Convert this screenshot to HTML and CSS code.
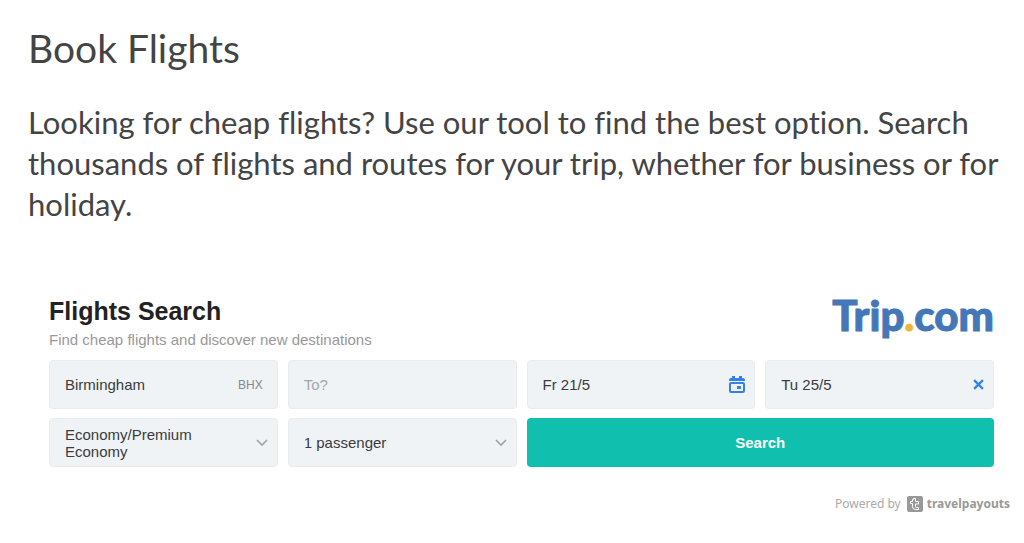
FILE: index.html
```html
<!DOCTYPE html>
<html lang="en">
<head>
    <meta charset="UTF-8">
    <meta name="viewport" content="width=device-width, initial-scale=1.0">
    <title>Book Flights</title>
    <link rel="stylesheet" href="styles.css">
</head>
<body>
    <main class="page">
        <h1>Book Flights</h1>
        <p class="intro">Looking for cheap flights? Use our tool to find the best option. Search thousands of flights and routes for your trip, whether for business or for holiday.</p>

        <section class="widget">
            <div class="widget-header">
                <div>
                    <h2>Flights Search</h2>
                    <p class="subtitle">Find cheap flights and discover new destinations</p>
                </div>
                <a class="logo" href="#">Trip<span class="logo-dot">.</span>com</a>
            </div>

            <form class="search-form">
                <label class="field">
                    <input type="text" name="origin" value="Birmingham" aria-label="From">
                    <span class="code">BHX</span>
                </label>
                <label class="field">
                    <input type="text" name="destination" placeholder="To?" aria-label="To">
                </label>
                <label class="field">
                    <input type="text" name="depart" value="Fr 21/5" aria-label="Depart date">
                    <svg class="calendar" viewBox="0 0 16 17" aria-hidden="true">
                        <path d="M0 5V4q0-2 2-2h1V0h3v2h4V0h3v2h1q2 0 2 2v1z" fill="currentColor"/>
                        <rect x="1" y="7" width="14" height="9" rx="1" fill="none" stroke="currentColor" stroke-width="2"/>
                        <rect x="8" y="10" width="4" height="3" fill="currentColor"/>
                    </svg>
                </label>
                <div class="field">
                    <input type="text" name="return" value="Tu 25/5" aria-label="Return date">
                    <button type="button" class="clear" aria-label="Clear return date">
                        <svg viewBox="0 0 10 10" aria-hidden="true">
                            <path d="M1 1l8 8M9 1L1 9" fill="none" stroke="currentColor" stroke-width="2"/>
                        </svg>
                    </button>
                </div>
                <label class="field">
                    <select name="cabin" aria-label="Cabin class">
                        <option>Economy/Premium Economy</option>
                        <option>Business</option>
                        <option>First</option>
                    </select>
                    <svg class="arrow" viewBox="0 0 12 8" aria-hidden="true">
                        <path d="M1 1l5 5 5-5" fill="none" stroke="currentColor" stroke-width="1.6"/>
                    </svg>
                </label>
                <label class="field">
                    <select name="passengers" aria-label="Passengers">
                        <option>1 passenger</option>
                        <option>2 passengers</option>
                        <option>3 passengers</option>
                    </select>
                    <svg class="arrow" viewBox="0 0 12 8" aria-hidden="true">
                        <path d="M1 1l5 5 5-5" fill="none" stroke="currentColor" stroke-width="1.6"/>
                    </svg>
                </label>
                <button type="submit" class="search-button">Search</button>
            </form>
        </section>

        <footer class="powered">
            <span>Powered by</span>
            <a href="#">
                <svg viewBox="0 0 16 16" aria-hidden="true">
                    <rect width="16" height="16" rx="2" fill="#999"/>
                    <path d="M5.5 3.5v2h-2v2h2v3q0 3 3 3h3v-2h-2q-1 0-1-1V8h3V5.500h-3v-3h-2v1z" fill="none" stroke="#fff" stroke-width="1"/>
                </svg>
                travelpayouts
            </a>
        </footer>
    </main>
</body>
</html>
```

FILE: styles.css
```css
* {
    box-sizing: border-box;
}

body {
    margin: 0;
    background-color: #fff;
    color: #444;
    font-family: "Liberation Sans", Arial, sans-serif;
}

h1, h2, p {
    margin: 0;
}

.page {
    padding: 24px 14px 24px 28px;
}

h1 {
    font-family: Lato, sans-serif;
    font-size: 39px;
    font-weight: 400;
    line-height: 48px;
}

.intro {
    margin-top: 30px;
    font-family: Lato, sans-serif;
    font-size: 31px;
    line-height: 41px;
    font-variant-ligatures: none;
}

.widget {
    padding: 71px 16px 0 21px;
}

.widget-header {
    display: flex;
    justify-content: space-between;
    align-items: flex-start;
    height: 64px;
}

h2 {
    color: #222;
    font-size: 25px;
    line-height: 30px;
}

.subtitle {
    margin-top: 4px;
    color: #999;
    font-size: 15px;
    line-height: 20px;
}

.logo {
    color: #4377b8;
    font-family: Lato, sans-serif;
    font-size: 42px;
    font-weight: 900;
    line-height: 38px;
    text-decoration: none;
    -webkit-text-stroke: 1px currentColor;
}

.logo-dot {
    color: #f0b43c;
}

.search-form {
    display: grid;
    grid-template-columns: repeat(4, minmax(0, 1fr));
    gap: 9px 10px;
}

.field {
    display: flex;
    align-items: center;
    height: 49px;
    padding: 0 9px 0 15px;
    background-color: #eff3f6;
    border: 1px solid #e8ebef;
    border-radius: 4px;
    color: #3b3b40;
}

.field input,
.field select {
    flex: 1;
    min-width: 0;
    padding: 0;
    border: none;
    background: none;
    color: inherit;
    font-family: inherit;
    font-size: 15px;
    outline: none;
}

.field select {
    appearance: none;
    appearance: base-select;
    min-height: 0;
    padding-right: 20px;
    line-height: 17px;
    white-space: normal;
}

.field select::picker-icon {
    display: none;
}

.field input::placeholder {
    color: #a5a8ab;
}

.code {
    padding-right: 5px;
    color: #85888c;
    font-size: 12px;
}

.calendar {
    width: 16px;
    height: 17px;
    color: #3481e8;
}

.clear {
    display: flex;
    padding: 0;
    border: none;
    background: none;
    color: #3481e8;
    cursor: pointer;
}

.clear svg {
    width: 11px;
    height: 11px;
}

.arrow {
    width: 12px;
    height: 8px;
    color: #a0a3a6;
}

.search-button {
    grid-column: span 2;
    border: none;
    border-radius: 4px;
    background-color: #10bfae;
    color: #fff;
    font-family: inherit;
    font-size: 15px;
    font-weight: bold;
    cursor: pointer;
}

.powered {
    display: flex;
    justify-content: flex-end;
    gap: 6px;
    margin-top: 29px;
    color: #aaa;
    font-family: "Noto Sans", sans-serif;
    font-size: 12px;
    line-height: 16px;
}

.powered a {
    display: flex;
    gap: 4px;
    color: #999;
    font-weight: bold;
    text-decoration: none;
}

.powered svg {
    width: 16px;
    height: 16px;
}
```
